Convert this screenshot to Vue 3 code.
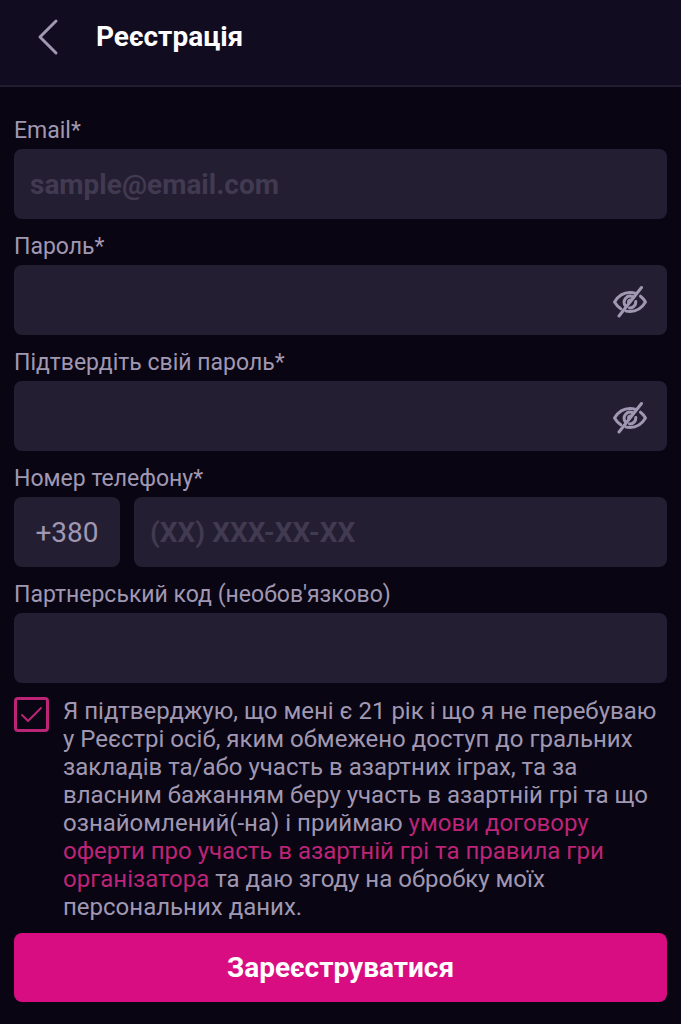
<script setup>
import { ref } from 'vue'

const email = ref('')
const passwords = ref([
  { id: 'password', label: 'Пароль*', value: '', shown: false },
  { id: 'password-confirm', label: 'Підтвердіть свій пароль*', value: '', shown: false },
])
const phone = ref('')
const partnerCode = ref('')
const agreed = ref(true)
</script>

<template>
  <div class="page">
    <header class="header">
      <button class="back" type="button" aria-label="Назад">
        <svg width="24" height="40" viewBox="0 0 24 40" fill="none" stroke="currentColor" stroke-width="3" stroke-linecap="round" stroke-linejoin="round">
          <path d="M20 4 4 20l16 16" />
        </svg>
      </button>
      <h1 class="title">Реєстрація</h1>
    </header>

    <form class="form" @submit.prevent>
      <div class="field">
        <label class="label" for="email">Email*</label>
        <input id="email" v-model="email" class="input" type="email" placeholder="sample@email.com" />
      </div>

      <div v-for="item in passwords" :key="item.id" class="field">
        <label class="label" :for="item.id">{{ item.label }}</label>
        <div class="input password">
          <input :id="item.id" v-model="item.value" class="bare" :type="item.shown ? 'text' : 'password'" />
          <button class="eye" type="button" aria-label="Показати пароль" @click="item.shown = !item.shown">
            <svg width="36" height="36" viewBox="0 0 36 36" fill="none" stroke="currentColor" stroke-width="3" stroke-linecap="round" stroke-linejoin="round">
              <path d="M23 11.200C21.500 10.700 20 10.500 18 10.500 10.500 10.500 5.500 15 2.500 20c1.500 2.500 3.600 4.900 6.300 6.700" />
              <path d="M28.500 14.200c2 1.500 3.700 3.600 5 5.800-3 5-8 9.500-15.500 9.500-1.400 0-2.700-.1-3.900-.4" />
              <path d="M20.500 14.600A6 6 0 0 0 13.600 24" />
              <path d="M23.800 19.500A6 6 0 0 1 17.500 25.900" />
              <path d="M18.300 17.600c-1.500.3-2.300 1.400-2.200 2.600" stroke-width="2" />
              <path d="M29.500 5.500 7 34" />
            </svg>
          </button>
        </div>
      </div>

      <div class="field">
        <label class="label" for="phone">Номер телефону*</label>
        <div class="phone">
          <span class="prefix">+380</span>
          <input id="phone" v-model="phone" class="input" type="tel" placeholder="(XX) XXX-XX-XX" />
        </div>
      </div>

      <div class="field">
        <label class="label" for="partner">Партнерський код (необов'язково)</label>
        <input id="partner" v-model="partnerCode" class="input" type="text" />
      </div>

      <div class="finish">
        <div class="consent">
          <span class="check">
            <input id="agree" v-model="agreed" class="box" type="checkbox" />
            <svg v-if="agreed" class="tick" width="35" height="35" viewBox="0 0 35 35" fill="none" stroke="currentColor" stroke-width="2" stroke-linecap="round" stroke-linejoin="round">
              <path d="M8 18l6 6 13-13" />
            </svg>
          </span>
          <label class="terms" for="agree">Я підтверджую, що мені є 21 рік і що я не перебуваю у Реєстрі осіб, яким обмежено доступ до гральних закладів та/або участь в азартних іграх, та за власним бажанням беру участь в азартній грі та що ознайомлений(-на) і приймаю <a class="link" href="#">умови договору оферти про участь в азартній грі та правила гри організатора</a> та даю згоду на обробку моїх персональних даних.</label>
        </div>
        <button class="submit" type="submit">Зареєструватися</button>
      </div>
    </form>
  </div>
</template>

<style>
body {
  background: #090513;
}
</style>

<style scoped>
.page {
  min-height: 100vh;
  background: #090513;
  color: #a098b2;
  font-family: Roboto, 'Noto Sans', sans-serif;
}

.page * {
  box-sizing: border-box;
}

button {
  border: 0;
  padding: 0;
  background: none;
  color: inherit;
  font-family: inherit;
  cursor: pointer;
}

.header {
  display: flex;
  align-items: center;
  gap: 36px;
  height: 87px;
  padding: 0 36px 12px;
  background: #120c20;
  border-bottom: 2px solid #221c31;
}

.back {
  display: flex;
}

.title {
  margin: 0;
  color: #fff;
  font-size: 28px;
  line-height: 32px;
  font-weight: 700;
}

.form {
  display: flex;
  flex-direction: column;
  gap: 14px;
  padding: 30px 14px 22px;
}

.field {
  display: flex;
  flex-direction: column;
  gap: 5px;
}

.label {
  font-size: 23px;
  line-height: 27px;
}

.input {
  width: 100%;
  min-width: 0;
  height: 70px;
  padding: 0 16px;
  border: 0;
  border-radius: 8px;
  outline: none;
  background: #241e33;
  color: #a098b2;
  font-family: inherit;
  font-size: 28px;
}

.input::placeholder {
  color: #413a51;
  font-weight: 700;
  opacity: 1;
}

.password {
  display: flex;
  align-items: center;
  gap: 16px;
  padding-right: 19px;
}

.bare {
  flex: 1;
  min-width: 0;
  height: 100%;
  padding: 0;
  border: 0;
  outline: none;
  background: none;
  color: inherit;
  font: inherit;
}

.eye {
  display: flex;
}

.phone {
  display: flex;
  gap: 14px;
}

.prefix {
  display: flex;
  flex: none;
  align-items: center;
  justify-content: center;
  width: 106px;
  border-radius: 8px;
  background: #241e33;
  font-size: 28px;
}

.phone .input {
  flex: 1;
}

.finish {
  display: flex;
  flex-direction: column;
  gap: 12px;
}

.consent {
  display: flex;
  align-items: flex-start;
  gap: 14px;
}

.check {
  position: relative;
  flex: none;
  width: 35px;
  height: 35px;
  color: #bb2477;
}

.box {
  display: block;
  width: 100%;
  height: 100%;
  margin: 0;
  border: 3px solid #bb2477;
  border-radius: 4px;
  appearance: none;
}

.tick {
  position: absolute;
  inset: 0;
  pointer-events: none;
}

.terms {
  flex: 1;
  font-size: 24px;
  line-height: 28px;
}

.link {
  color: #bb2477;
  text-decoration: none;
}

.submit {
  height: 69px;
  border-radius: 8px;
  background: #d90d82;
  color: #fff;
  font-size: 28px;
  font-weight: 700;
}
</style>
